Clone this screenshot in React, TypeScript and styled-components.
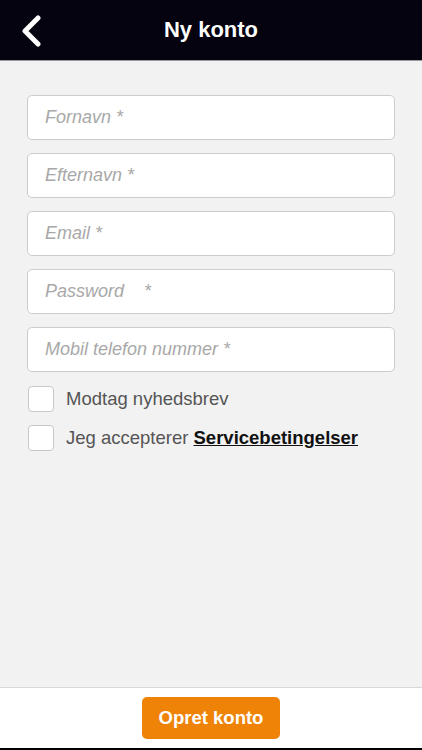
import React from "react";
import styled, { createGlobalStyle } from "styled-components";

const GlobalStyle = createGlobalStyle`
  html, body {
    margin: 0;
    padding: 0;
    background: #f2f2f2;
    font-family: "Liberation Sans", Arial, sans-serif;
  }
  * { box-sizing: border-box; }
`;

const fields = ["Fornavn *", "Efternavn *", "Email *", "Password    *", "Mobil telefon nummer *"];

export default function App() {
  return (
    <>
      <GlobalStyle />
      <Page>
        <Header>
          <BackButton aria-label="Tilbage">
            <svg width="22" height="32" viewBox="0 0 22 32">
              <path
                d="M18 3 L5 16 L18 29"
                fill="none"
                stroke="#fff"
                strokeWidth="5"
                strokeLinecap="round"
                strokeLinejoin="round"
              />
            </svg>
          </BackButton>
          <Title>Ny konto</Title>
        </Header>
        <Form>
          {fields.map((f) => (
            <Input key={f} placeholder={f} />
          ))}
          <CheckRow>
            <Box />
            <Label>Modtag nyhedsbrev</Label>
          </CheckRow>
          <CheckRow>
            <Box />
            <Label>
              Jeg accepterer <Terms href="#">Servicebetingelser</Terms>
            </Label>
          </CheckRow>
        </Form>
        <Footer>
          <SubmitButton>Opret konto</SubmitButton>
        </Footer>
      </Page>
    </>
  );
}

const Page = styled.div`
  width: 422px;
  height: 750px;
  display: flex;
  flex-direction: column;
  background: #f2f2f2;
  border-bottom: 2px solid #000;
`;

const Header = styled.header`
  position: relative;
  height: 61px;
  background: #04030f;
  display: flex;
  align-items: center;
  justify-content: center;
  border-bottom: 1px solid #9a9a9e;
  flex-shrink: 0;
`;

const BackButton = styled.button`
  position: absolute;
  left: 20px;
  top: 15px;
  padding: 0;
  border: none;
  background: none;
  display: flex;
`;

const Title = styled.h1`
  margin: 0;
  color: #fff;
  font-size: 22px;
  font-weight: 700;
`;

const Form = styled.div`
  flex: 1;
  display: flex;
  flex-direction: column;
  gap: 13px;
  padding: 34px 27px 0 27px;
`;

const Input = styled.input`
  width: 368px;
  height: 45px;
  border: 1px solid #cccccc;
  border-radius: 5px;
  background: #fff;
  padding: 0 17px;
  font-family: "Liberation Sans", Arial, sans-serif;
  font-size: 18px;
  font-style: italic;
  color: #333;
  white-space: pre;
  &::placeholder {
    color: #a8a8a8;
  }
`;

const CheckRow = styled.label`
  display: flex;
  align-items: center;
  gap: 12px;
  margin-left: 1px;
  &:first-of-type {
    margin-top: 1px;
  }
`;

const Box = styled.span`
  width: 26px;
  height: 26px;
  border: 1px solid #c8c8c8;
  border-radius: 4px;
  background: #fff;
  flex-shrink: 0;
`;

const Label = styled.span`
  font-size: 18.5px;
  color: #555;
`;

const Terms = styled.a`
  color: #111;
  font-weight: 700;
  text-decoration: underline;
`;

const Footer = styled.footer`
  height: 61px;
  background: #fff;
  border-top: 1px solid #d8d8d8;
  display: flex;
  justify-content: center;
  padding-top: 9px;
  flex-shrink: 0;
`;

const SubmitButton = styled.button`
  width: 138px;
  height: 42px;
  border: none;
  border-radius: 5px;
  background: #ee8308;
  color: #fff;
  font-family: "Liberation Sans", Arial, sans-serif;
  font-size: 18.5px;
  font-weight: 700;
`;
